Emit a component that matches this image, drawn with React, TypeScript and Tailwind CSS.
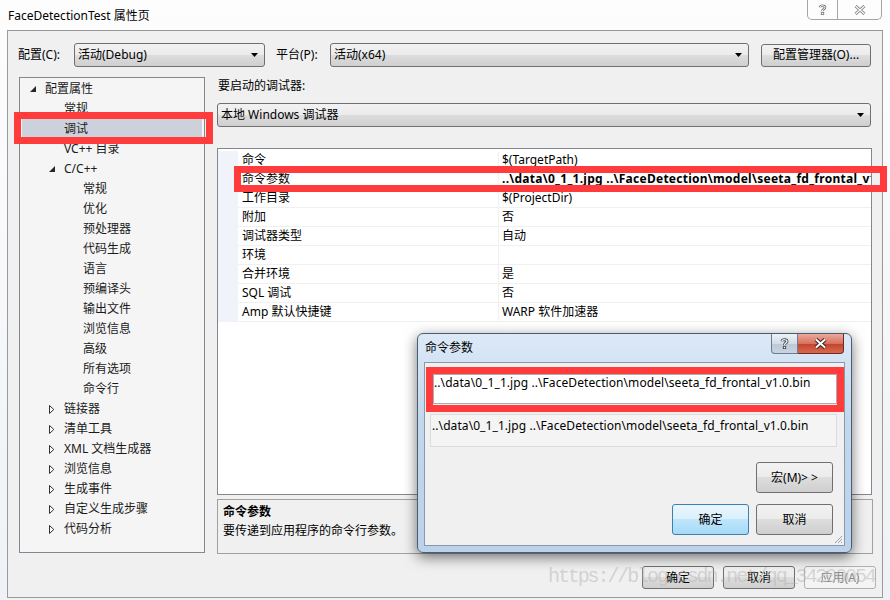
import React from "react";

type TreeItem = { label: string; level: number; expander?: "open" | "closed"; selected?: boolean };

const treeItems: TreeItem[] = [
  { label: "配置属性", level: 0, expander: "open" },
  { label: "常规", level: 1 },
  { label: "调试", level: 1, selected: true },
  { label: "VC++ 目录", level: 1 },
  { label: "C/C++", level: 1, expander: "open" },
  { label: "常规", level: 2 },
  { label: "优化", level: 2 },
  { label: "预处理器", level: 2 },
  { label: "代码生成", level: 2 },
  { label: "语言", level: 2 },
  { label: "预编译头", level: 2 },
  { label: "输出文件", level: 2 },
  { label: "浏览信息", level: 2 },
  { label: "高级", level: 2 },
  { label: "所有选项", level: 2 },
  { label: "命令行", level: 2 },
  { label: "链接器", level: 1, expander: "closed" },
  { label: "清单工具", level: 1, expander: "closed" },
  { label: "XML 文档生成器", level: 1, expander: "closed" },
  { label: "浏览信息", level: 1, expander: "closed" },
  { label: "生成事件", level: 1, expander: "closed" },
  { label: "自定义生成步骤", level: 1, expander: "closed" },
  { label: "代码分析", level: 1, expander: "closed" }
];

const args = "..\\data\\0_1_1.jpg ..\\FaceDetection\\model\\seeta_fd_frontal_v1.0.bin";

const properties = [
  { name: "命令", value: "$(TargetPath)" },
  { name: "命令参数", value: args, bold: true },
  { name: "工作目录", value: "$(ProjectDir)" },
  { name: "附加", value: "否" },
  { name: "调试器类型", value: "自动" },
  { name: "环境", value: "" },
  { name: "合并环境", value: "是" },
  { name: "SQL 调试", value: "否" },
  { name: "Amp 默认快捷键", value: "WARP 软件加速器" }
];

const btnBg =
  "border-[#707070] bg-[linear-gradient(to_bottom,#f2f2f2_0%,#ebebeb_50%,#dddddd_50%,#cfcfcf_100%)]";
const btnDefault =
  "border-[#3c7fb1] bg-[linear-gradient(to_bottom,#eaf6fd_0%,#d9f0fc_50%,#bee6fd_50%,#a7d9f5_100%)]";

const Caret = () => (
  <svg width="7" height="4" viewBox="0 0 7 4">
    <polygon points="0,0 7,0 3.5,4" fill="#000" />
  </svg>
);

const Combo = ({ text, className }: { text: string; className: string }) => (
  <div
    className={`flex items-center justify-between rounded-[3px] border pl-[3px] pr-[6px] ${btnBg} ${className}`}
  >
    <span>{text}</span>
    <Caret />
  </div>
);

const Button = ({ label, className }: { label: string; className: string }) => (
  <div className={`flex items-center justify-center rounded-[3px] border ${className}`}>{label}</div>
);

const Expander = ({ kind }: { kind: "open" | "closed" }) => (
  <div className="flex w-[15px] items-center">
    {kind === "open" ? (
      <svg width="7" height="7" viewBox="0 0 7 7">
        <polygon points="6,0 6,6 0,6" fill="#262626" />
      </svg>
    ) : (
      <svg width="6" height="9" viewBox="0 0 6 9">
        <polygon points="0.5,0.5 4.8,4.5 0.5,8.5" fill="#fff" stroke="#303030" strokeWidth="1" />
      </svg>
    )}
  </div>
);

const treePad = (item: TreeItem) => {
  if (item.level === 0) return "pl-[8px]";
  if (item.level === 1) return item.expander ? "pl-[27px]" : "pl-[42px]";
  return "pl-[61px]";
};

export default function App() {
  return (
    <div className="relative h-[600px] w-[890px] overflow-hidden bg-[linear-gradient(to_bottom,#fdfdfd,#eef2f6)] font-['Noto_Sans','Noto_Sans_CJK_SC',sans-serif] text-[12px] leading-[16px] text-black">
      {/* title bar */}
      <div className="flex h-[30px] items-start">
        <div className="ml-[8px] mt-[8px]">FaceDetectionTest 属性页</div>
        <div className="ml-auto mr-[8px] flex h-[20px]">
          <div className="flex w-[31px] items-center justify-center rounded-bl-[5px] border border-t-0 border-[#a5a5a5]">
            <svg width="9" height="11" viewBox="0 0 9 11">
              <path d="M2 3.2 C2 1.2 7 1.2 7 3.4 C7 5 4.5 5 4.5 7" fill="none" stroke="#7a7a7a" strokeWidth="2.6" />
              <path d="M2 3.2 C2 1.2 7 1.2 7 3.4 C7 5 4.5 5 4.5 7" fill="none" stroke="#fff" strokeWidth="1" />
              <rect x="3.3" y="8.3" width="2.4" height="2.4" fill="#fff" stroke="#7a7a7a" strokeWidth="0.9" />
            </svg>
          </div>
          <div className="flex w-[44px] items-center justify-center rounded-br-[5px] border border-l-0 border-t-0 border-[#a5a5a5]">
            <svg width="12" height="10" viewBox="0 0 12 10">
              <path d="M1.5 1 L10.5 9 M10.5 1 L1.5 9" stroke="#7a7a7a" strokeWidth="3" />
              <path d="M1.5 1 L10.5 9 M10.5 1 L1.5 9" stroke="#fff" strokeWidth="1.2" />
            </svg>
          </div>
        </div>
      </div>

      {/* main panel */}
      <div className="ml-[7px] flex h-[568px] w-[876px] flex-col border border-[#9a9a9a] bg-[#f0f0f0]">
        {/* configuration row */}
        <div className="mt-[12px] flex h-[24px] items-center pl-[10px]">
          <span className="w-[56px]">配置(C):</span>
          <Combo text="活动(Debug)" className="h-[24px] w-[191px]" />
          <span className="ml-[11px] w-[54px]">平台(P):</span>
          <Combo text="活动(x64)" className="h-[24px] w-[419px]" />
          <Button label="配置管理器(O)..." className={`ml-[12px] h-[23px] w-[110px] ${btnBg}`} />
        </div>

        <div className="mt-[10px] flex">
          {/* property tree */}
          <div className="ml-[11px] h-[476px] w-[186px] border border-[#828790] bg-[#f5f5f5] pt-[1px]">
            {treeItems.map((item, index) => (
              <div
                key={index}
                className={`mx-[2px] flex h-[20px] items-center ${treePad(item)} ${item.selected ? "bg-[#cdd1dc]" : ""}`}
              >
                {item.expander && <Expander kind={item.expander} />}
                <span className="text-[#1a1a1a]">{item.label}</span>
              </div>
            ))}
          </div>

          {/* debugger settings */}
          <div className="ml-[12px] flex w-[655px] flex-col">
            <div className="ml-[1px] h-[16px] pt-[1px]">要启动的调试器:</div>
            <Combo text="本地 Windows 调试器" className="mt-[10px] h-[24px] w-[654px]" />

            <div className="mt-[21px] h-[347px] border border-[#828790] bg-white pt-[2px]">
              {properties.map((p, index) => (
                <div key={index} className="flex h-[19px]">
                  <div className="w-[20px] bg-[#f0f3f9]" />
                  <div className="flex w-[260px] items-center border-b border-[#f0f0f0] pl-[4px]">{p.name}</div>
                  <div className="w-[1px] bg-[#f0f0f0]" />
                  <div
                    className={`flex flex-1 items-center overflow-hidden whitespace-nowrap border-b border-[#f0f0f0] pl-[3px] ${p.bold ? "font-bold tracking-[0.26px]" : ""}`}
                  >
                    {p.value}
                  </div>
                </div>
              ))}
            </div>

            <div className="mt-[4px] h-[55px] w-[656px] border border-[#a0a0a0] px-[5px] pt-[2px] leading-[19px]">
              <div className="font-bold">命令参数</div>
              <div>要传递到应用程序的命令行参数。</div>
            </div>
          </div>
        </div>

        {/* dialog buttons */}
        <div className="mt-[12px] flex justify-end gap-[9px] pr-[6px]">
          <Button label="确定" className={`h-[23px] w-[72px] ${btnBg}`} />
          <Button label="取消" className={`h-[23px] w-[72px] ${btnBg}`} />
          <Button label="应用(A)" className="h-[23px] w-[72px] border-[#adb2b5] bg-[#f4f4f4] text-[#838383]" />
        </div>
      </div>

      {/* annotation boxes */}
      <div className="pointer-events-none absolute left-[14px] top-[112px] h-[32px] w-[199px] border-[7px] border-[#ff3b3b]" />
      <div className="pointer-events-none absolute left-[234px] top-[166px] h-[26px] w-[653px] border-[7px] border-[#ff3b3b]" />

      {/* 命令参数 popup dialog */}
      <div className="absolute left-[417px] top-[333px] flex h-[220px] w-[435px] flex-col rounded-[6px] border border-[#4b5d74] bg-[linear-gradient(to_bottom,#dce9f7,#c3d7ed_40%,#bcd2ea)] shadow-[0_4px_14px_rgba(0,0,0,0.55)]">
        <div className="flex h-[28px] items-start">
          <div className="ml-[7px] mt-[6px]">命令参数</div>
          <div className="ml-auto mr-[7px] flex h-[20px]">
            <div className="flex w-[27px] items-center justify-center rounded-bl-[4px] border border-t-0 border-[#6d7d91] bg-[linear-gradient(to_bottom,#eef2f7,#d3dce7_50%,#bcc8d6_50%,#c9d4e1)]">
              <svg width="9" height="11" viewBox="0 0 9 11">
                <path d="M2 3.2 C2 1.2 7 1.2 7 3.4 C7 5 4.5 5 4.5 7" fill="none" stroke="#3b4552" strokeWidth="2.8" />
                <path d="M2 3.2 C2 1.2 7 1.2 7 3.4 C7 5 4.5 5 4.5 7" fill="none" stroke="#fff" strokeWidth="1.2" />
                <rect x="3.3" y="8.3" width="2.4" height="2.4" fill="#fff" stroke="#3b4552" strokeWidth="0.9" />
              </svg>
            </div>
            <div className="flex w-[46px] items-center justify-center rounded-br-[4px] border border-l-0 border-t-0 border-[#6b2b24] bg-[linear-gradient(to_bottom,#eaa99c,#d9715f_50%,#c2412d_50%,#d86a4e)]">
              <svg width="13" height="11" viewBox="0 0 13 11">
                <path d="M2 1.5 L11 9.5 M11 1.5 L2 9.5" stroke="#3a2420" strokeWidth="4" />
                <path d="M2 1.5 L11 9.5 M11 1.5 L2 9.5" stroke="#fff" strokeWidth="2" />
              </svg>
            </div>
          </div>
        </div>

        <div className="relative mx-[6px] flex h-[184px] flex-col border border-[#8b98a8] bg-[#f0f0f0]">
          <div className="ml-[8px] mt-[11px] h-[30px] w-[404px] border border-[#abadb3] bg-white pt-[1px] leading-[14px] tracking-[0.08px]">
            {args}
          </div>
          <div className="ml-[5px] mt-[10px] h-[33px] w-[407px] border border-[#dcdcdc] bg-[#f4f4f4] pl-[1px] pt-[4px] leading-[14px] tracking-[0.08px]">
            {args}
          </div>
          <Button label="宏(M)> >" className={`ml-[331px] mt-[15px] h-[31px] w-[77px] ${btnBg}`} />
          <div className="mt-[11px] flex gap-[7px] pl-[247px]">
            <Button label="确定" className={`h-[31px] w-[77px] ${btnDefault}`} />
            <Button label="取消" className={`h-[31px] w-[77px] ${btnBg}`} />
          </div>
          {/* resize grip */}
          <svg className="absolute bottom-[1px] right-[1px]" width="10" height="10" viewBox="0 0 10 10">
            <path d="M9 2 L2 9 M9 5 L5 9 M9 8 L8 9" stroke="#9aa3ad" strokeWidth="1" />
          </svg>
          <div className="pointer-events-none absolute left-[1px] top-[4px] h-[45px] w-[418px] border-[7px] border-[#ff3b3b]" />
        </div>
      </div>

      {/* watermark */}
      <div className="pointer-events-none absolute left-[548px] top-[565px] font-['Liberation_Mono',monospace] text-[20px] leading-[24px] tracking-[-2.1px] text-[#b4b4b4]/50">
        https://blog.csdn.net/qq_34200054
      </div>
    </div>
  );
}
